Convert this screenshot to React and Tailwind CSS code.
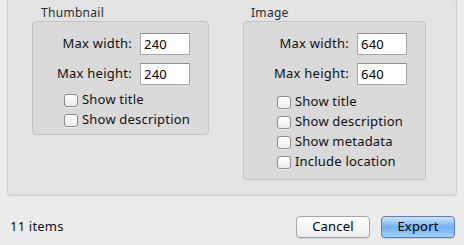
import React from "react";

function Field({ label, value }) {
  return (
    <div className="flex items-center justify-end gap-[8px]">
      <span className="whitespace-nowrap text-[13px] tracking-[0.25px] text-[#111]">{label}</span>
      <input
        type="text"
        defaultValue={value}
        className="w-[50px] h-[22px] px-[3px] bg-white border border-[#a8a8a8] border-t-[#8e8e8e] text-[13px] tracking-[0.25px] text-black outline-none"
      />
    </div>
  );
}

function Check({ label }) {
  return (
    <label className="flex items-center h-[20px] gap-[4px] whitespace-nowrap">
      <span className="shrink-0 w-[14px] h-[13px] rounded-[3px] border border-[#8c8c8c] bg-gradient-to-b from-white to-[#ececec] shadow-[0_1px_0_rgba(255,255,255,0.6)]" />
      <span className="whitespace-nowrap text-[13px] tracking-[0.2px] text-[#111]">{label}</span>
    </label>
  );
}

function Group({ title, width, titlePad, checks, checkTop, checkPad, bottomPad }) {
  return (
    <div className="flex flex-col" style={{ width }}>
      <div className="h-[15px] leading-[15px] text-[12px] tracking-[0.3px] text-[#2b2b2b] mb-[1px]" style={{ paddingLeft: titlePad }}>
        {title}
      </div>
      <div
        className="bg-[#dadada] border border-[#c4c4c4] rounded-[4px] pt-[11px] pr-[18px]"
        style={{ paddingBottom: bottomPad }}
      >
        <div className="flex flex-col gap-[8px]">
          <Field label="Max width:" value={title === "Image" ? "640" : "240"} />
          <Field label="Max height:" value={title === "Image" ? "640" : "240"} />
        </div>
        <div className="flex flex-col" style={{ marginTop: checkTop, paddingLeft: checkPad }}>
          {checks.map((c) => (
            <Check key={c} label={c} />
          ))}
        </div>
      </div>
    </div>
  );
}

export default function App() {
  return (
    <div
      className="w-[464px] h-[245px] overflow-hidden bg-[#ececec] flex flex-col"
      style={{ fontFamily: '"Noto Sans", "DejaVu Sans", sans-serif' }}
    >
      <div className="mx-[7px] -mt-[2px] bg-[#e3e3e3] border border-[#cdcdcd] rounded-[4px] pt-[6px] pb-[15px] pl-[24px] flex items-start gap-[34px]">
        <Group
          title="Thumbnail"
          width={177}
          titlePad={9}
          checks={["Show title", "Show description"]}
          checkTop={5}
          checkPad={31}
          bottomPad={4}
        />
        <Group
          title="Image"
          width={183}
          titlePad={8}
          checks={["Show title", "Show description", "Show metadata", "Include location"]}
          checkTop={7}
          checkPad={33}
          bottomPad={7}
        />
      </div>
      <div className="flex items-center mt-[20px] pl-[10px] pr-[9px]">
        <span className="text-[13px] tracking-[0.2px] text-[#111]">11 items</span>
        <div className="ml-auto flex gap-[11px]">
          <button className="w-[74px] h-[22px] rounded-[4px] border border-[#a6a6a6] bg-gradient-to-b from-white to-[#ededed] text-[13px] tracking-[0.2px] text-black shadow-[0_1px_1px_rgba(0,0,0,0.1)]">
            Cancel
          </button>
          <button className="w-[74px] h-[22px] rounded-[4px] border border-[#5d7fb3] bg-gradient-to-b from-[#cfe6fc] via-[#6fb1f3] to-[#a3d1fb] text-[13px] tracking-[0.2px] text-black shadow-[0_1px_1px_rgba(0,0,0,0.15)]">
            Export
          </button>
        </div>
      </div>
    </div>
  );
}
